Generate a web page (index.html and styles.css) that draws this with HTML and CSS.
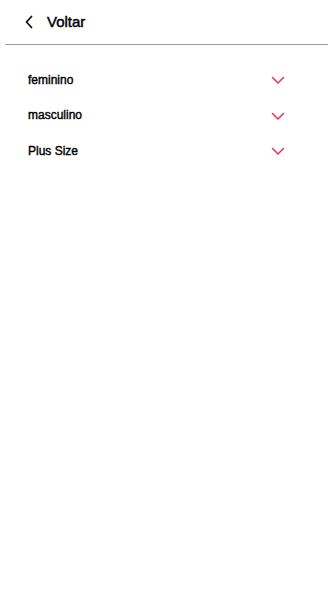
FILE: index.html
```html
<!DOCTYPE html>
<html lang="pt">
<head>
<meta charset="utf-8">
<title>Voltar</title>
<link rel="stylesheet" href="styles.css">
</head>
<body>
<header class="topbar">
  <button class="back" type="button">
    <svg class="back-icon" width="10" height="14" viewBox="0 0 10 14" aria-hidden="true">
      <path d="M7.5 1.5 L2.5 7 L7.5 12.5" fill="none" stroke="#111" stroke-width="1.8" stroke-linecap="round" stroke-linejoin="round"/>
    </svg>
    <span class="back-label">Voltar</span>
  </button>
</header>
<nav class="menu">
  <div class="item"><span class="label">feminino</span>
    <svg class="chev" width="14" height="9" viewBox="0 0 14 9" aria-hidden="true"><path d="M1.5 1.5 L7 7 L12.5 1.5" fill="none" stroke="#e8324f" stroke-width="1.5" stroke-linecap="round" stroke-linejoin="round"/></svg>
  </div>
  <div class="item"><span class="label">masculino</span>
    <svg class="chev" width="14" height="9" viewBox="0 0 14 9" aria-hidden="true"><path d="M1.5 1.5 L7 7 L12.5 1.5" fill="none" stroke="#e8324f" stroke-width="1.5" stroke-linecap="round" stroke-linejoin="round"/></svg>
  </div>
  <div class="item"><span class="label">Plus Size</span>
    <svg class="chev" width="14" height="9" viewBox="0 0 14 9" aria-hidden="true"><path d="M1.5 1.5 L7 7 L12.5 1.5" fill="none" stroke="#e8324f" stroke-width="1.5" stroke-linecap="round" stroke-linejoin="round"/></svg>
  </div>
</nav>
</body>
</html>
```
FILE: styles.css
```css
* { box-sizing: border-box; }
html, body {
  margin: 0;
  padding: 0;
  background: #fff;
  font-family: "Liberation Sans", Arial, sans-serif;
  color: #111;
}
.topbar {
  height: 45px;
  margin: 0 5px;
  border-bottom: 1px solid #9a9a9a;
  display: flex;
  align-items: center;
  padding-left: 19px;
}
.back {
  display: flex;
  align-items: center;
  gap: 13px;
  border: 0;
  background: none;
  padding: 0;
  margin-top: -1px;
  font: inherit;
  color: inherit;
}
.back-icon { display: block; }
.back-label {
  font-size: 15px;
  color: #000;
  -webkit-text-stroke: 0.45px #000;
}
.menu {
  padding: 26px 48px 0 28px;
  display: flex;
  flex-direction: column;
}
.item {
  height: 35.5px;
  display: flex;
  align-items: center;
  justify-content: space-between;
  margin-top: -9px;
}
.item + .item { margin-top: 0; }
.label {
  font-size: 12px;
  color: #000;
  -webkit-text-stroke: 0.4px #000;
}
.chev { display: block; margin-top: 2px; }
```
